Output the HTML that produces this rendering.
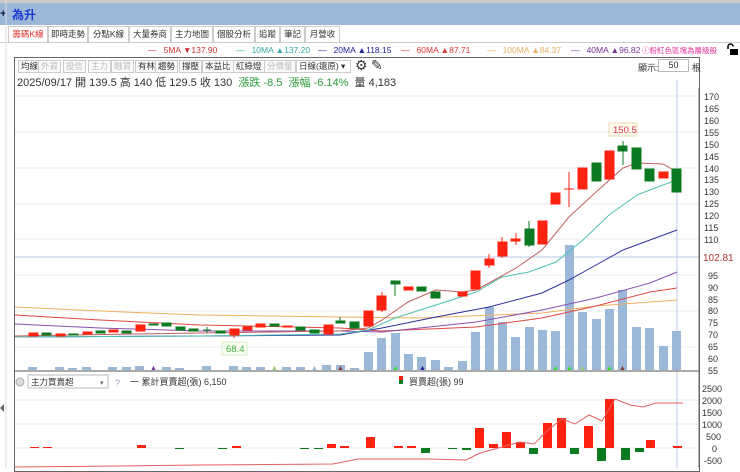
<!DOCTYPE html>
<html><head><meta charset="utf-8"><style>
*{margin:0;padding:0;box-sizing:border-box}
body{width:740px;height:468px;overflow:hidden;background:#fff;font-family:"Liberation Sans","Noto Sans CJK TC",sans-serif;position:relative;font-size:10px;color:#333}
.a{position:absolute;white-space:nowrap}
.tab{position:absolute;top:26px;height:16px;border:1px solid #ccc;border-bottom:none;font-size:8.5px;line-height:15px;padding:0;color:#333;background:#fff;text-align:center;white-space:nowrap;overflow:hidden}
.btn{position:absolute;top:60px;height:13px;border:1px solid #ccc;font-size:8.5px;line-height:11px;padding:0 2px;color:#333;background:#fafafa}
.dis{color:#bbb}
.lg{position:absolute;top:45px;font-size:8.5px;white-space:nowrap}
</style></head><body>
<div class="a" style="left:0;top:0;width:740px;height:3px;background:#ccc"></div>
<div class="a" style="left:0;top:3px;width:740px;height:22px;background:#9db7d9"></div>
<div class="a" style="left:0;top:8px;font-size:11px;color:#124;font-weight:bold">+</div>
<div class="a" style="left:12px;top:6px;font-size:12px;color:#1a3ad0;font-weight:bold">為升</div>
<div class="tab" style="left:8px;width:40px;color:#e0302a">籌碼K線</div>
<div class="tab" style="left:48px;width:40px">即時走勢</div>
<div class="tab" style="left:88px;width:41px">分點K線</div>
<div class="tab" style="left:129px;width:42px">大量券商</div>
<div class="tab" style="left:171px;width:42px">主力地圖</div>
<div class="tab" style="left:213px;width:42px">個股分析</div>
<div class="tab" style="left:255px;width:25px">追蹤</div>
<div class="tab" style="left:280px;width:25px">筆記</div>
<div class="tab" style="left:305px;width:35px">月營收</div>
<div class="a" style="left:0;top:42px;width:740px;height:1px;background:#ccc"></div>
<div class="lg" style="left:148px;color:#c33">—&nbsp;&nbsp;&nbsp;5MA ▼137.90</div>
<div class="lg" style="left:236px;color:#3aa">—&nbsp;&nbsp;&nbsp;10MA ▲137.20</div>
<div class="lg" style="left:318px;color:#229">—&nbsp;&nbsp;&nbsp;20MA ▲118.15</div>
<div class="lg" style="left:401px;color:#d33">—&nbsp;&nbsp;&nbsp;60MA ▲87.71</div>
<div class="lg" style="left:487px;color:#e9b060">—&nbsp;&nbsp;&nbsp;100MA ▲84.37</div>
<div class="lg" style="left:571px;color:#739">—&nbsp;&nbsp;&nbsp;40MA ▲96.82</div>
<div class="lg" style="top:45px;left:642px;font-size:7.5px;color:#e4309a">ⓘ粉紅色區塊為層級股</div>
<svg class="a" style="left:725px;top:43px" width="14" height="12"><path d="M3 6V3.5a2.5 2.5 0 0 1 5 0" fill="none" stroke="#000" stroke-width="1.5"/><rect x="5" y="6" width="8" height="6" fill="#000"/></svg>
<div class="a" style="left:14px;top:57px;width:686px;height:415px;border:1px solid #666"></div>
<div class="btn" style="left:18px">均線</div>
<div class="btn dis" style="left:38px">外資</div>
<div class="btn dis" style="left:63px">投信</div>
<div class="btn dis" style="left:88px">主力</div>
<div class="btn dis" style="left:111px">融資</div>
<div class="btn" style="left:135px">有林</div>
<div class="btn" style="left:155px">趨勢</div>
<div class="btn" style="left:179px">撐壓</div>
<div class="btn" style="left:202px">本益比</div>
<div class="btn" style="left:233px">紅綠燈</div>
<div class="btn dis" style="left:264px">分價量</div>
<div class="btn" style="left:296px;width:55px;background:#fff">日線(還原)&nbsp;▾</div>
<div class="a" style="left:355px;top:57px;font-size:14px;color:#333">⚙</div>
<div class="a" style="left:371px;top:57px;font-size:14px;color:#333">✎</div>
<div class="a" style="left:638px;top:61px;font-size:9px">顯示:</div>
<div class="a" style="left:658px;top:59px;width:31px;height:13px;border:1px solid #bbb;font-size:9px;text-align:center;line-height:11px">50</div>
<div class="a" style="left:692px;top:61px;font-size:9px">根</div>
<div class="a" style="left:17px;top:74px;font-size:11px;color:#333">2025/09/17 開 139.5 高 140 低 129.5 收 130 &nbsp;<span style="color:#2a9a3a">漲跌 -8.5 &nbsp;漲幅 -6.14%</span> &nbsp;量 4,183</div>
<svg class="a" style="left:0;top:0" width="740" height="468">
<g stroke="#eee" stroke-width="1">
<line x1="15" y1="96" x2="699" y2="96"/><line x1="15" y1="132" x2="699" y2="132"/><line x1="15" y1="168" x2="699" y2="168"/><line x1="15" y1="204" x2="699" y2="204"/><line x1="15" y1="239" x2="699" y2="239"/><line x1="15" y1="275" x2="699" y2="275"/><line x1="15" y1="311" x2="699" y2="311"/><line x1="15" y1="347" x2="699" y2="347"/>
<line x1="15" y1="400" x2="699" y2="400"/><line x1="15" y1="424" x2="699" y2="424"/><line x1="15" y1="448" x2="699" y2="448"/>
</g>
<line x1="15" y1="257" x2="699" y2="257" stroke="#b9c9ee"/>
<line x1="677" y1="80" x2="677" y2="468" stroke="#b9c9ee"/>
<line x1="699" y1="88" x2="699" y2="468" stroke="#666"/>
<line x1="15" y1="371" x2="699" y2="371" stroke="#555"/>
<line x1="6" y1="0" x2="6" y2="468" stroke="#ddd"/>
<polygon points="4,404 4,412 0,408" fill="#666"/>
<g fill="#9bb8d8">
<rect x="28" y="367" width="9" height="3"/><rect x="55" y="367" width="9" height="3"/><rect x="68" y="368" width="9" height="2"/><rect x="82" y="367" width="9" height="3"/><rect x="108" y="367" width="9" height="3"/><rect x="122" y="367" width="9" height="3"/><rect x="135" y="366" width="9" height="4"/><rect x="162" y="367" width="9" height="3"/><rect x="175" y="368" width="9" height="2"/><rect x="202" y="366" width="9" height="4"/><rect x="229" y="366" width="9" height="4"/><rect x="242" y="367" width="9" height="3"/><rect x="256" y="367" width="9" height="3"/><rect x="282" y="367" width="9" height="3"/><rect x="296" y="367" width="9" height="3"/><rect x="322" y="365" width="9" height="5"/><rect x="336" y="365" width="9" height="5"/><rect x="350" y="368" width="9" height="2"/>
<rect x="364" y="352" width="9" height="18"/><rect x="377" y="338" width="9" height="32"/><rect x="391" y="333" width="9" height="37"/><rect x="404" y="354" width="9" height="16"/><rect x="417" y="357" width="9" height="13"/><rect x="431" y="360" width="9" height="10"/><rect x="444" y="367" width="9" height="3"/><rect x="458" y="361" width="9" height="9"/><rect x="471" y="332" width="9" height="38"/><rect x="485" y="307" width="9" height="63"/><rect x="498" y="322" width="9" height="48"/><rect x="511" y="337" width="9" height="33"/><rect x="525" y="327" width="9" height="43"/><rect x="538" y="330" width="9" height="40"/><rect x="551" y="331" width="9" height="39"/><rect x="565" y="245" width="9" height="125"/><rect x="578" y="312" width="9" height="58"/><rect x="592" y="319" width="9" height="51"/><rect x="605" y="309" width="9" height="61"/><rect x="618" y="290" width="9" height="80"/><rect x="632" y="327" width="9" height="43"/><rect x="645" y="328" width="9" height="42"/><rect x="659" y="346" width="9" height="24"/><rect x="672" y="331" width="9" height="39"/>
</g>
<g font-size="7"><text x="150" y="370" fill="#739">▲</text><text x="271" y="370" fill="#9c6">▲</text><text x="311" y="370" fill="#9bd">▲</text><text x="337" y="370" fill="#833">▲</text><text x="392" y="370" fill="#3d3">▲</text><text x="419" y="370" fill="#229">▲</text><text x="552" y="370" fill="#3d3">▲</text><text x="566" y="370" fill="#3d3">▲</text><text x="579" y="370" fill="#9c6">▲</text><text x="606" y="370" fill="#3d3">▲</text><text x="619" y="370" fill="#833">▲</text></g>
<g fill="none" stroke-width="1">
<polyline stroke="#f0b060" points="15,307 100,311 200,315 340,317 420,318 542,313 596,306 650,302 677,300"/>
<polyline stroke="#e04848" points="15,315 100,320 200,325 340,328 382,331 476,327 542,318 596,306 650,292 677,288"/>
<polyline stroke="#8a50b0" points="15,324 100,328 200,331 340,331 382,332 476,322 542,310 596,298 650,283 677,272"/>
<polyline stroke="#3030a0" points="15,337 200,336 340,335 382,328 436,317 489,307 542,293 569,280 596,265 623,250 650,240 677,230"/>
<polyline stroke="#50c0b0" points="15,337 200,336 340,334 368,330 395,318 436,305 476,292 502,277 529,272 556,262 583,240 609,215 637,195 663,185 677,180"/>
<polyline stroke="#c06060" points="15,336 200,333 340,331 368,328 382,320 408,302 436,290 462,292 476,290 489,283 516,268 542,250 569,217 596,192 623,168 637,163 663,164 677,172"/>
</g>
<g stroke-width="1">
<g fill="#f21" stroke="#f21">
<rect x="29" y="333" width="9" height="3"/><rect x="56" y="334" width="9" height="2"/><rect x="83" y="332" width="9" height="2"/><rect x="109" y="330" width="9" height="2"/><rect x="136" y="325" width="9" height="6"/><rect x="230" y="329" width="9" height="6"/><line x1="234" y1="335" x2="234" y2="338"/><rect x="243" y="327" width="9" height="3"/><rect x="256" y="324" width="9" height="3"/><rect x="283" y="326" width="9" height="1"/><rect x="324" y="325" width="9" height="9"/>
<rect x="364" y="311" width="9" height="15"/><rect x="377" y="296" width="9" height="14"/><line x1="382" y1="292" x2="382" y2="312"/><rect x="404" y="287" width="9" height="3"/><rect x="458" y="292" width="9" height="4"/><rect x="471" y="271" width="9" height="18"/><rect x="485" y="259" width="9" height="6"/><line x1="489" y1="254" x2="489" y2="268"/><rect x="498" y="242" width="9" height="14"/><line x1="502" y1="237" x2="502" y2="258"/><rect x="511" y="239" width="9" height="2"/><line x1="516" y1="233" x2="516" y2="245"/><rect x="538" y="221" width="9" height="23"/><rect x="551" y="193" width="9" height="11"/><line x1="569" y1="172" x2="569" y2="207"/><line x1="564" y1="189" x2="574" y2="189"/><rect x="578" y="168" width="9" height="21"/><rect x="605" y="151" width="9" height="28"/><rect x="659" y="172" width="9" height="6"/>
</g>
<g fill="#0c7a20" stroke="#0c7a20">
<rect x="42" y="333" width="9" height="2"/><rect x="69" y="334" width="9" height="1"/><rect x="96" y="331" width="9" height="2"/><rect x="122" y="331" width="9" height="2"/><rect x="149" y="324" width="9" height="1"/><rect x="162" y="323" width="9" height="3"/><rect x="176" y="327" width="9" height="3"/><rect x="189" y="329" width="9" height="2"/><line x1="207" y1="327" x2="207" y2="333"/><line x1="203" y1="330" x2="211" y2="330"/><rect x="216" y="331" width="9" height="2"/><rect x="270" y="324" width="9" height="2"/><rect x="296" y="327" width="9" height="3"/><rect x="310" y="330" width="9" height="3"/><rect x="336" y="321" width="9" height="2"/><line x1="340" y1="317" x2="340" y2="321"/><rect x="350" y="322" width="9" height="6"/>
<rect x="391" y="281" width="9" height="3"/><line x1="395" y1="284" x2="395" y2="296"/><rect x="417" y="287" width="9" height="4"/><rect x="431" y="292" width="9" height="6"/><rect x="525" y="229" width="9" height="16"/><line x1="529" y1="221" x2="529" y2="247"/><rect x="592" y="163" width="9" height="18"/><rect x="618" y="146" width="9" height="5"/><line x1="623" y1="141" x2="623" y2="165"/><rect x="632" y="148" width="9" height="21"/><rect x="645" y="169" width="9" height="12"/><rect x="672" y="169" width="9" height="23"/>
</g></g>
<rect x="609" y="123" width="28" height="13" fill="#fffbea" stroke="#e8dcb0"/>
<text x="613" y="133" font-size="9.5" fill="#d35">150.5</text>
<rect x="222" y="342" width="25" height="13" fill="#f8fff0" stroke="#d8e8c8"/>
<text x="226" y="352" font-size="9.5" fill="#4a4">68.4</text>
<g font-size="9" fill="#333">
<text x="704" y="100">170</text><text x="704" y="112">165</text><text x="704" y="124">160</text><text x="704" y="136">155</text><text x="704" y="148">150</text><text x="704" y="160">145</text><text x="704" y="172">140</text><text x="704" y="183">135</text><text x="704" y="195">130</text><text x="704" y="207">125</text><text x="704" y="219">120</text><text x="704" y="231">115</text><text x="704" y="243">110</text><text x="708" y="279">95</text><text x="708" y="291">90</text><text x="708" y="303">85</text><text x="708" y="314">80</text><text x="708" y="326">75</text><text x="708" y="338">70</text><text x="708" y="350">65</text><text x="708" y="362">60</text><text x="708" y="374">55</text>
<text x="702" y="392">2500</text><text x="702" y="404">2000</text><text x="702" y="416">1500</text><text x="702" y="428">1000</text><text x="706" y="440">500</text><text x="712" y="452">0</text><text x="704" y="464">-500</text>
</g>
<text x="703" y="261" font-size="10" fill="#a33">102.81</text>
<circle cx="20" cy="382" r="4" fill="#ddd" stroke="#aaa"/>
<rect x="28" y="375" width="80" height="13" fill="#fff" stroke="#bbb"/>
<text x="31" y="385" font-size="8.5" fill="#333">主力買賣超</text><text x="100" y="385" font-size="7" fill="#666">▾</text>
<text x="115" y="386" font-size="9" fill="#99b">?</text>
<text x="130" y="385" font-size="9" fill="#333">一 累計買賣超(張) 6,150</text>
<rect x="399" y="376" width="4" height="4" fill="#f21"/><rect x="399" y="380" width="4" height="4" fill="#0c7a20"/>
<text x="409" y="385" font-size="9" fill="#333">買賣超(張) 99</text>
<g fill="#f21">
<rect x="30" y="447" width="9" height="1"/><rect x="43" y="447" width="9" height="1"/><rect x="137" y="445" width="9" height="3"/><rect x="232" y="446" width="9" height="2"/><rect x="327" y="444" width="9" height="4"/><rect x="340" y="446" width="9" height="2"/><rect x="366" y="437" width="9" height="11"/><rect x="394" y="446" width="9" height="2"/><rect x="407" y="446" width="9" height="2"/><rect x="475" y="428" width="9" height="20"/><rect x="489" y="444" width="9" height="4"/><rect x="502" y="432" width="9" height="16"/><rect x="516" y="442" width="9" height="6"/><rect x="543" y="423" width="9" height="25"/><rect x="557" y="418" width="9" height="30"/><rect x="584" y="426" width="9" height="22"/><rect x="605" y="399" width="9" height="49"/><rect x="646" y="440" width="9" height="8"/><rect x="673" y="446" width="9" height="2"/>
</g>
<g fill="#0c7a20">
<rect x="421" y="448" width="9" height="5"/><rect x="462" y="448" width="9" height="2"/><rect x="529" y="448" width="9" height="6"/><rect x="570" y="448" width="9" height="6"/><rect x="597" y="448" width="9" height="13"/><rect x="621" y="448" width="9" height="12"/><rect x="635" y="448" width="9" height="4"/>
<rect x="175" y="448" width="9" height="1"/><rect x="218" y="448" width="9" height="1"/><rect x="300" y="448" width="9" height="1"/><rect x="314" y="448" width="9" height="1"/><rect x="448" y="448" width="9" height="1"/>
</g>
<polyline fill="none" stroke="#e46060" points="15,467 120,466 200,465 333,464 358,459 428,459 466,460 480,453 520,442 534,444 548,430 562,419 575,424 589,415 602,421 615,399 630,405 643,407 656,403 683,403"/>
</svg>
</body></html>
